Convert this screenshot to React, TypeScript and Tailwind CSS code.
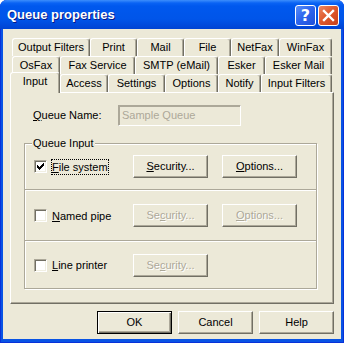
import React from "react";

const FONT = "font-['Liberation_Sans',Arial,sans-serif]";

type TabDef = { label: string; w: string; selected?: boolean };

const row1: TabDef[] = [
  { label: "Output Filters", w: "w-[78px]" },
  { label: "Print", w: "w-[47px]" },
  { label: "Mail", w: "w-[47px]" },
  { label: "File", w: "w-[47px]" },
  { label: "NetFax", w: "w-[48px]" },
  { label: "WinFax", w: "w-[53px]" },
];
const row2: TabDef[] = [
  { label: "OsFax", w: "w-[48px]" },
  { label: "Fax Service", w: "w-[75px]" },
  { label: "SMTP (eMail)", w: "w-[83px]" },
  { label: "Esker", w: "w-[47px]" },
  { label: "Esker Mail", w: "w-[67px]" },
];
const row3: TabDef[] = [
  { label: "Input", w: "w-[50px]", selected: true },
  { label: "Access", w: "w-[48px]" },
  { label: "Settings", w: "w-[57px]" },
  { label: "Options", w: "w-[53px]" },
  { label: "Notify", w: "w-[43px]" },
  { label: "Input Filters", w: "w-[71px]" },
];

function Tab({ t }: { t: TabDef }) {
  if (t.selected) {
    return (
      <div
        className={`${t.w} relative z-10 -ml-[2px] -mt-[2px] h-[21px] pb-[3px] flex items-center justify-center bg-[#ECE9D8] border-l border-t border-white border-r border-r-[#716F64] rounded-t-[3px] shadow-[inset_-1px_0_0_#ACA899] text-[11px] text-black`}
      >
        {t.label}
      </div>
    );
  }
  return (
    <div
      className={`${t.w} h-[18px] flex items-center justify-center border-l border-t border-white border-r border-r-[#716F64] rounded-t-[3px] shadow-[inset_-1px_0_0_#ACA899] text-[11px] text-black`}
    >
      {t.label}
    </div>
  );
}

function TabRow({ tabs }: { tabs: TabDef[] }) {
  return (
    <div className="flex items-start h-[18px] ml-[2px]">
      {tabs.map((t) => (
        <Tab key={t.label} t={t} />
      ))}
    </div>
  );
}

function Btn({
  children,
  disabled,
  def,
}: {
  children: React.ReactNode;
  disabled?: boolean;
  def?: boolean;
}) {
  if (def) {
    return (
      <div className="w-[75px] h-[23px] flex items-center justify-center border border-black bg-[#ECE9D8] shadow-[inset_1px_1px_0_#fff,inset_-1px_-1px_0_#716F64,inset_-2px_-2px_0_#ACA899] text-[11px] text-black">
        {children}
      </div>
    );
  }
  return (
    <div
      className={`w-[75px] h-[23px] flex items-center justify-center border border-t-white border-l-white border-r-[#716F64] border-b-[#716F64] bg-[#ECE9D8] shadow-[inset_-1px_-1px_0_#ACA899] text-[11px] ${
        disabled ? "text-[#ACA899] [text-shadow:1px_1px_0_#fff]" : "text-black"
      }`}
    >
      {children}
    </div>
  );
}

function CheckBox({ checked }: { checked?: boolean }) {
  return (
    <div className="w-[13px] h-[13px] shrink-0 bg-white border border-t-[#ACA899] border-l-[#ACA899] border-r-white border-b-white shadow-[inset_1px_1px_0_#716F64,inset_-1px_-1px_0_#F1EFE2]">
      {checked && (
        <svg width="11" height="11" viewBox="0 0 11 11" shapeRendering="crispEdges">
          <g fill="#000">
            <rect x="8" y="2" width="1" height="1" />
            <rect x="7" y="3" width="2" height="1" />
            <rect x="2" y="4" width="1" height="1" />
            <rect x="6" y="4" width="3" height="1" />
            <rect x="2" y="5" width="2" height="1" />
            <rect x="5" y="5" width="3" height="1" />
            <rect x="2" y="6" width="5" height="1" />
            <rect x="3" y="7" width="3" height="1" />
            <rect x="4" y="8" width="1" height="1" />
          </g>
        </svg>
      )}
    </div>
  );
}

function InputRow({
  h,
  checked,
  focused,
  label,
  secDisabled,
  withOptions,
  optDisabled,
}: {
  h: string;
  checked?: boolean;
  focused?: boolean;
  label: React.ReactNode;
  secDisabled?: boolean;
  withOptions?: boolean;
  optDisabled?: boolean;
}) {
  return (
    <div className={`${h} flex items-center pl-[9px]`}>
      <div className="w-[99px] flex items-center">
        <CheckBox checked={checked} />
        <span
          className={`ml-[4px] leading-[14px] text-[11px] text-black border ${
            focused ? "border-dotted border-black" : "border-transparent"
          }`}
        >
          {label}
        </span>
      </div>
      <Btn disabled={secDisabled}>
        {secDisabled ? (
          <span>
            Se<span className="underline">c</span>urity...
          </span>
        ) : (
          <span>
            <span className="underline">S</span>ecurity...
          </span>
        )}
      </Btn>
      {withOptions && (
        <div className="ml-[14px]">
          <Btn disabled={optDisabled}>
            <span>
              <span className="underline">O</span>ptions...
            </span>
          </Btn>
        </div>
      )}
    </div>
  );
}

export default function App() {
  return (
    <div className={`w-[344px] h-[343px] bg-white ${FONT}`}>
      <div className="w-[344px] h-[343px] rounded-t-[7px] overflow-hidden flex flex-col bg-[#0853E4] shadow-[inset_1px_0_0_#0831D9,inset_-1px_0_0_#0831D9,inset_0_-1px_0_#0831D9]">
        {/* Title bar */}
        <div className="h-[29px] shrink-0 flex items-start bg-[linear-gradient(to_bottom,#3D8EFC_0px,#0A63F4_3px,#0058EE_6px,#0055E9_19px,#004ADC_25px,#0043D2_29px)]">
          <div className="pl-[7px] pt-[6px] text-[13px] leading-[17px] font-bold text-white [text-shadow:1px_1px_0_#0A1883] flex-1">
            Queue properties
          </div>
          <div className="flex items-start pt-[5px] pr-[5px] gap-[2px]">
            <div className="w-[21px] h-[21px] rounded-[3px] border border-white bg-[linear-gradient(135deg,#5A8EF8_0%,#2E66EE_45%,#1D4FD9_100%)] flex items-center justify-center text-white font-bold text-[16px] leading-none font-['DejaVu_Sans',sans-serif]">
              ?
            </div>
            <div className="w-[21px] h-[21px] rounded-[3px] border border-white bg-[linear-gradient(135deg,#ED8762_0%,#DF5A2E_45%,#C9401A_100%)] flex items-center justify-center">
              <svg width="13" height="13" viewBox="0 0 13 13">
                <path d="M2 2 L11 11 M11 2 L2 11" stroke="#fff" strokeWidth="2.4" strokeLinecap="square" />
              </svg>
            </div>
          </div>
        </div>

        {/* Client area */}
        <div className="flex-1 mx-[3px] mb-[4px] bg-[#ECE9D8] px-[7px] pt-[9px] flex flex-col">
          <TabRow tabs={row1} />
          <TabRow tabs={row2} />
          <TabRow tabs={row3} />

          {/* Tab page */}
          <div className="h-[212px] border border-t-white border-l-white border-r-[#716F64] border-b-[#716F64] shadow-[inset_-1px_-1px_0_#ACA899] flex flex-col">
            <div className="mt-[12px] ml-[22px] flex items-center">
              <div className="w-[85px] text-[11px] text-black">
                <span className="underline">Q</span>ueue Name:
              </div>
              <div className="w-[123px] h-[21px] border border-t-[#ACA899] border-l-[#ACA899] border-r-white border-b-white shadow-[inset_1px_1px_0_#ACA899] flex items-center pl-[3px] text-[11px] text-[#ACA899]">
                Sample Queue
              </div>
            </div>

            {/* Group box */}
            <div className="relative mt-[17px] ml-[13px] w-[293px] border border-[#ACA899] shadow-[inset_1px_1px_0_#fff,1px_1px_0_#fff] flex flex-col">
              <div className="absolute -top-[8px] left-[7px] px-[1px] bg-[#ECE9D8] text-[11px] leading-[14px] text-black">
                Queue Input
              </div>
              <InputRow
                h="h-[45px]"
                checked
                focused
                label={
                  <span>
                    <span className="underline">F</span>ile system
                  </span>
                }
                withOptions
              />
              <div className="h-[2px] border-t border-t-[#ACA899] border-b border-b-white" />
              <InputRow
                h="h-[49px]"
                label={
                  <span>
                    <span className="underline">N</span>amed pipe
                  </span>
                }
                secDisabled
                withOptions
                optDisabled
              />
              <div className="h-[2px] border-t border-t-[#ACA899] border-b border-b-white" />
              <InputRow
                h="h-[46px]"
                label={
                  <span>
                    <span className="underline">L</span>ine printer
                  </span>
                }
                secDisabled
              />
            </div>
          </div>

          {/* Dialog buttons */}
          <div className="mt-[7px] flex justify-end gap-[6px]">
            <Btn def>OK</Btn>
            <Btn>Cancel</Btn>
            <Btn>Help</Btn>
          </div>
        </div>
      </div>
    </div>
  );
}
